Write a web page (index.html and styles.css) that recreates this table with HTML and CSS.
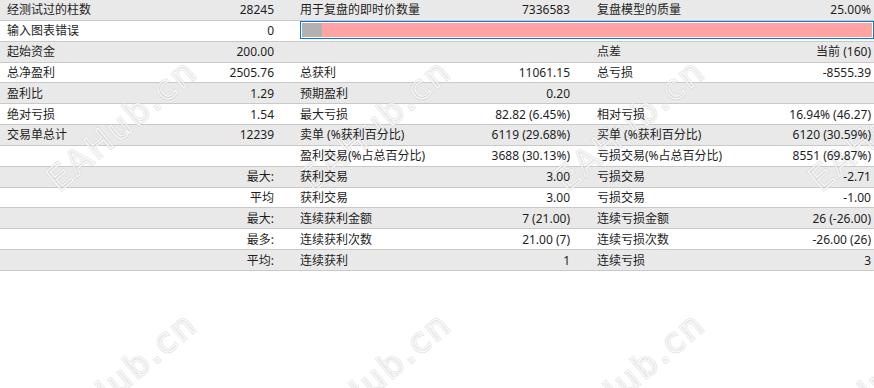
FILE: index.html
```html
<!DOCTYPE html>
<html lang="zh-CN">
<head>
<meta charset="utf-8">
<title>报告</title>
<link rel="stylesheet" href="styles.css">
</head>
<body>
<div class="page">
  <div class="report">
    <div class="row alt"><span class="lbl">经测试过的柱数</span><span class="val">28245</span><span class="lbl">用于复盘的即时价数量</span><span class="val">7336583</span><span class="lbl">复盘模型的质量</span><span class="val">25.00%</span></div>
    <div class="row"><span class="lbl">输入图表错误</span><span class="val">0</span><div class="quality"><div class="bar"><span class="bar-gray"></span><span class="bar-pink"></span></div></div></div>
    <div class="row alt"><span class="lbl">起始资金</span><span class="val">200.00</span><span class="lbl"></span><span class="val"></span><span class="lbl">点差</span><span class="val">当前 (160)</span></div>
    <div class="row"><span class="lbl">总净盈利</span><span class="val">2505.76</span><span class="lbl">总获利</span><span class="val">11061.15</span><span class="lbl">总亏损</span><span class="val">-8555.39</span></div>
    <div class="row alt"><span class="lbl">盈利比</span><span class="val">1.29</span><span class="lbl">预期盈利</span><span class="val">0.20</span><span class="lbl"></span><span class="val"></span></div>
    <div class="row"><span class="lbl">绝对亏损</span><span class="val">1.54</span><span class="lbl">最大亏损</span><span class="val">82.82 (6.45%)</span><span class="lbl">相对亏损</span><span class="val">16.94% (46.27)</span></div>
    <div class="row alt"><span class="lbl">交易单总计</span><span class="val">12239</span><span class="lbl">卖单 (%获利百分比)</span><span class="val">6119 (29.68%)</span><span class="lbl">买单 (%获利百分比)</span><span class="val">6120 (30.59%)</span></div>
    <div class="row"><span class="lbl"></span><span class="val"></span><span class="lbl">盈利交易(%占总百分比)</span><span class="val">3688 (30.13%)</span><span class="lbl">亏损交易(%占总百分比)</span><span class="val">8551 (69.87%)</span></div>
    <div class="row alt"><span class="lbl"></span><span class="val">最大:</span><span class="lbl">获利交易</span><span class="val">3.00</span><span class="lbl">亏损交易</span><span class="val">-2.71</span></div>
    <div class="row"><span class="lbl"></span><span class="val">平均</span><span class="lbl">获利交易</span><span class="val">3.00</span><span class="lbl">亏损交易</span><span class="val">-1.00</span></div>
    <div class="row alt"><span class="lbl"></span><span class="val">最大:</span><span class="lbl">连续获利金额</span><span class="val">7 (21.00)</span><span class="lbl">连续亏损金额</span><span class="val">26 (-26.00)</span></div>
    <div class="row"><span class="lbl"></span><span class="val">最多:</span><span class="lbl">连续获利次数</span><span class="val">21.00 (7)</span><span class="lbl">连续亏损次数</span><span class="val">-26.00 (26)</span></div>
    <div class="row alt"><span class="lbl"></span><span class="val">平均:</span><span class="lbl">连续获利</span><span class="val">1</span><span class="lbl">连续亏损</span><span class="val">3</span></div>
  </div>
  <div class="watermarks" aria-hidden="true">
    <div class="wm-cell"><span class="wm" data-t="EAHub.cn">EAHub.cn</span></div>
    <div class="wm-cell"><span class="wm" data-t="EAHub.cn">EAHub.cn</span></div>
    <div class="wm-cell"><span class="wm" data-t="EAHub.cn">EAHub.cn</span></div>
    <div class="wm-cell"><span class="wm" data-t="EAHub.cn">EAHub.cn</span></div>
    <div class="wm-cell"><span class="wm" data-t="EAHub.cn">EAHub.cn</span></div>
    <div class="wm-cell"><span class="wm" data-t="EAHub.cn">EAHub.cn</span></div>
    <div class="wm-cell"><span class="wm" data-t="EAHub.cn">EAHub.cn</span></div>
    <div class="wm-cell"><span class="wm" data-t="EAHub.cn">EAHub.cn</span></div>
  </div>
</div>
</body>
</html>
```
FILE: styles.css
```css
html, body {
  margin: 0;
  padding: 0;
  background: #ffffff;
}
body {
  font-family: "Noto Sans", "Noto Sans CJK SC", sans-serif;
  font-size: 12px;
  color: #1e1e1e;
}
.page {
  position: relative;
  width: 874px;
  height: 388px;
  overflow: hidden;
}
.report {
  display: flex;
  flex-direction: column;
}
.row {
  display: grid;
  grid-template-columns: 150px 146px 150px 147px 150px 131px;
  height: 19.85px;
  border-bottom: 1px solid #c9c9c9;
  background: #ffffff;
  align-items: center;
}
.row.alt {
  background: #e9e9e9;
}
.lbl, .val {
  position: relative;
  z-index: 2;
  white-space: nowrap;
  line-height: 19px;
}
.val {
  text-align: right;
}
.row > :nth-child(1) { padding-left: 7px; }
.row > :nth-child(2) { padding-right: 22px; }
.row > :nth-child(3) { padding-left: 4px; }
.row > :nth-child(4) { padding-right: 23px; }
.row > :nth-child(5) { padding-left: 4px; }
.row > :nth-child(6) { padding-right: 3px; }

.quality {
  grid-column: 3 / 7;
  align-self: start;
  padding-left: 1px;
  position: relative;
  z-index: 0;
}
.bar {
  display: flex;
  border: 1px solid #0a78d4;
  padding: 1px;
  box-sizing: border-box;
  height: 18px;
  background: #ffffff;
}
.bar-gray {
  width: 20px;
  background: #b1b1b1;
}
.bar-pink {
  flex: 1;
  background: #ffa3a3;
}

.watermarks {
  position: absolute;
  z-index: 1;
  left: -5px;
  top: -2px;
  display: grid;
  grid-template-columns: repeat(4, 254px);
  grid-template-rows: repeat(2, 253px);
  pointer-events: none;
}
.wm-cell {
  display: flex;
  align-items: center;
  justify-content: center;
}
.wm {
  position: relative;
  display: inline-block;
  font-family: "DejaVu Sans", sans-serif;
  font-size: 33px;
  letter-spacing: 3px;
  line-height: 1;
  color: transparent;
  -webkit-text-stroke: 2.4px rgba(195, 195, 195, 0.55);
  transform: rotate(-40deg);
  white-space: nowrap;
}
.wm::after {
  content: attr(data-t);
  position: absolute;
  left: 0;
  top: 0;
  color: transparent;
  -webkit-text-stroke: 1.2px rgba(255, 255, 255, 0.9);
}
```
